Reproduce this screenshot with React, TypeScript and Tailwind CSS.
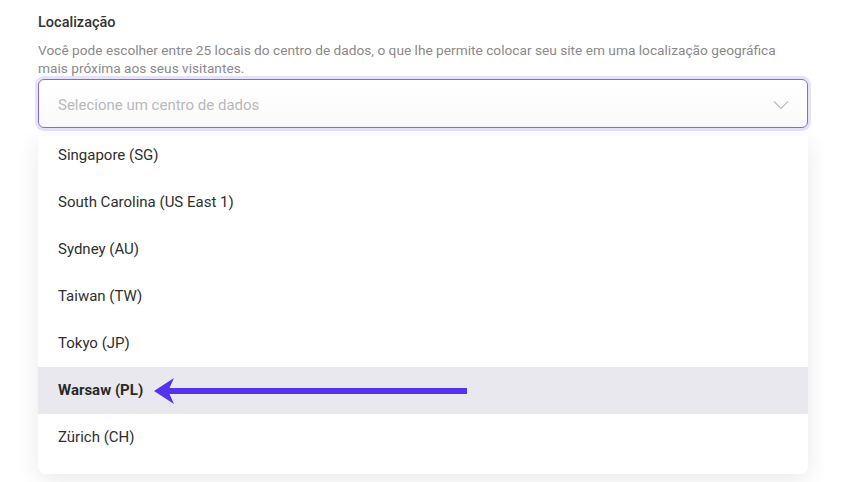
const locations = [
  'Singapore (SG)',
  'South Carolina (US East 1)',
  'Sydney (AU)',
  'Taiwan (TW)',
  'Tokyo (JP)',
  'Warsaw (PL)',
  'Zürich (CH)',
];

const App = () => {
  const selected = 'Warsaw (PL)';

  return (
    <div className="w-[846px] h-[482px] overflow-hidden bg-white font-['Roboto',sans-serif]">
      <div className="pl-[38px] pr-[38px] pt-[13px]">
        <p className="text-[14.5px] font-medium text-[#333] leading-[20px]">Localização</p>
        <p className="mt-[8px] text-[13.7px] leading-[18px] text-[#8a8a8a]">
          Você pode escolher entre 25 locais do centro de dados, o que lhe permite colocar seu site em uma localização geográfica
          <br />
          mais próxima aos seus visitantes.
        </p>

        {/* Select */}
        <div className="mt-[2px] h-[49px] rounded-[6px] border-[1.5px] border-[#7b6af0] ring-[3px] ring-[#e6e1fc] bg-gradient-to-b from-white to-[#fafafa] flex items-center justify-between pl-[19px] pr-[18px] pt-[3px]">
          <span className="text-[15px] text-[#b9b9b9]">Selecione um centro de dados</span>
          <svg className="w-[16px] h-[10px] text-[#bdbdbd]" viewBox="0 0 16 10" fill="none" stroke="currentColor" strokeWidth="1.2">
            <path d="M1 1.5l7 7 7-7" />
          </svg>
        </div>

        {/* Dropdown */}
        <div className="mt-[8px] h-[338px] rounded-b-[8px] rounded-t-[3px] bg-white shadow-[0_6px_24px_rgba(0,0,0,0.09)] overflow-hidden">
          <ul className="-mt-[4px]">
            {locations.map((loc) => (
              <li
                key={loc}
                className={`relative h-[47px] flex items-center pl-[20px] text-[15px] ${
                  loc === selected ? 'bg-[#e9e8ef] font-bold text-[#2a2a2a]' : 'text-[#2f2f2f]'
                }`}
              >
                {loc}
                {loc === selected && (
                  <svg className="absolute left-[116px] top-[10px]" width="316" height="28" viewBox="0 0 316 28">
                    <path d="M0 14L20 1L15.5 11H313V17H15.5L20 27Z" fill="#5533ee" />
                  </svg>
                )}
              </li>
            ))}
          </ul>
        </div>
      </div>
    </div>
  );
};

export default App;
